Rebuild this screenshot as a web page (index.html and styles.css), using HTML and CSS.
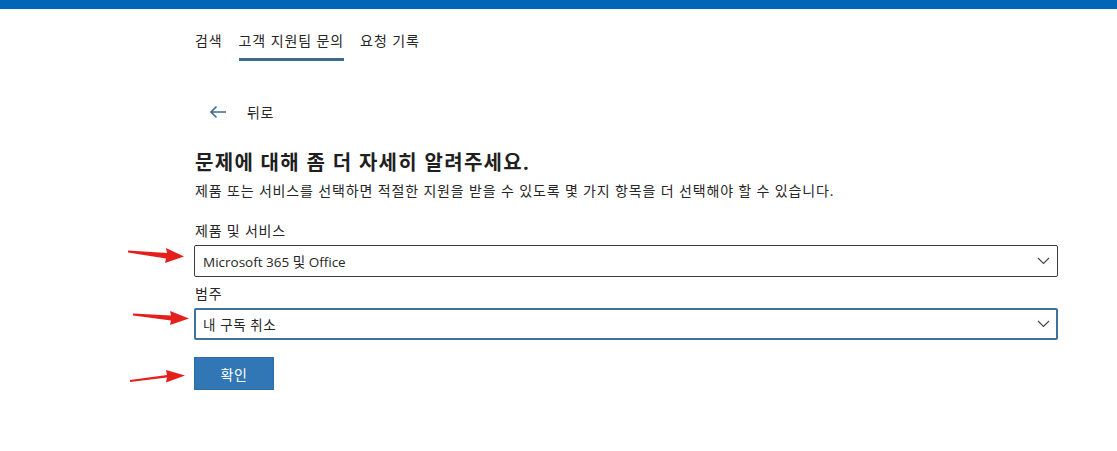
FILE: index.html
```html
<!DOCTYPE html>
<html lang="ko">
<head>
  <meta charset="UTF-8">
  <title>고객 지원팀 문의</title>
  <link rel="stylesheet" href="styles.css">
</head>
<body>
  <div class="top-bar"></div>

  <div class="page">
    <nav class="tabs">
      <a class="tab">검색</a>
      <a class="tab active">고객 지원팀 문의</a>
      <a class="tab">요청 기록</a>
    </nav>

    <a class="back-link">
      <svg class="back-icon" width="18" height="14" viewBox="0 0 18 14">
        <path d="M17 7H2M7.5 1.5L2 7l5.5 5.5" fill="none" stroke="#3d6a8f" stroke-width="1.6"/>
      </svg>
      <span>뒤로</span>
    </a>

    <h1 class="title">문제에 대해 좀 더 자세히 알려주세요.</h1>
    <p class="subtitle">제품 또는 서비스를 선택하면 적절한 지원을 받을 수 있도록 몇 가지 항목을 더 선택해야 할 수 있습니다.</p>

    <div class="field">
      <label class="field-label">제품 및 서비스</label>
      <div class="select">
        <span>Microsoft 365 및 Office</span>
        <svg class="chevron" width="13" height="8" viewBox="0 0 13 8">
          <path d="M1 1l5.5 5.5L12 1" fill="none" stroke="#444" stroke-width="1.1"/>
        </svg>
      </div>
    </div>

    <div class="field">
      <label class="field-label">범주</label>
      <div class="select focused">
        <span>내 구독 취소</span>
        <svg class="chevron" width="13" height="8" viewBox="0 0 13 8">
          <path d="M1 1l5.5 5.5L12 1" fill="none" stroke="#444" stroke-width="1.1"/>
        </svg>
      </div>
    </div>

    <button class="confirm-button">확인</button>
  </div>

  <!-- red callout arrows -->
  <svg class="callouts" width="1117" height="451" viewBox="0 0 1117 451">
    <g fill="#e3201b">
      <polygon points="128,250.5 167,253 166,248 184,256.5 165,263 166,258.5 128,252.5"/>
      <polygon points="133,313.5 171,315.5 170,311 189,318.5 170,325 171,320.5 133,315.5"/>
      <polygon points="130,382 167,377.5 166,382.5 185,375.5 166,370 167,375 130,380"/>
    </g>
  </svg>
</body>
</html>
```

FILE: styles.css
```css
body {
  margin: 0;
  background: #fff;
  color: #262626;
  font-family: "Segoe UI", "Open Sans", "Noto Sans CJK KR", sans-serif;
  position: relative;
}

.top-bar {
  height: 9px;
  background-color: #0067b8;
}

.page {
  padding-left: 194px;
  width: 864px;
}

.tabs {
  display: flex;
  gap: 16px;
  padding-top: 21px;
  padding-left: 1px;
}

.tab {
  font-size: 14px;
  letter-spacing: 0.9px;
  line-height: 22px;
  color: #262626;
  padding-bottom: 6px;
  border-bottom: 3px solid transparent;
  cursor: pointer;
}

.tab.active {
  border-bottom-color: #3d6a8f;
}

.back-link {
  display: flex;
  align-items: center;
  gap: 20px;
  margin-top: 41px;
  margin-left: 15px;
  font-size: 14px;
  letter-spacing: 0.6px;
  color: #262626;
  cursor: pointer;
}

.title {
  margin: 28px 0 0 1px;
  font-size: 20px;
  letter-spacing: 1.3px;
  font-weight: 700;
  line-height: 26px;
  color: #1f1f1f;
}

.subtitle {
  margin: 6px 0 0 1px;
  font-size: 14px;
  letter-spacing: 0.85px;
  line-height: 18px;
  color: #262626;
}

.field {
  margin-top: 21px;
}

.field + .field {
  margin-top: 7px;
}

.field-label {
  display: block;
  margin-left: 1px;
  font-size: 14px;
  letter-spacing: 0.8px;
  line-height: 20px;
  margin-bottom: 4px;
}

.select {
  display: flex;
  align-items: center;
  justify-content: space-between;
  box-sizing: border-box;
  height: 32px;
  padding: 0 7px 0 8px;
  border: 1px solid #3b3b3b;
  border-radius: 2px;
  font-size: 13.5px;
  color: #262626;
}

.select.focused {
  border: 2px solid #3f7399;
  padding: 0 6px 0 7px;
  letter-spacing: 0.6px;
}

.confirm-button {
  display: block;
  margin-top: 17px;
  width: 80px;
  height: 33px;
  background-color: #3277b5;
  color: #fff;
  border: 1px solid #2e6ca4;
  font-family: inherit;
  font-size: 14px;
  letter-spacing: 0.6px;
  cursor: pointer;
}

.callouts {
  position: absolute;
  top: 0;
  left: 0;
  pointer-events: none;
}
```
